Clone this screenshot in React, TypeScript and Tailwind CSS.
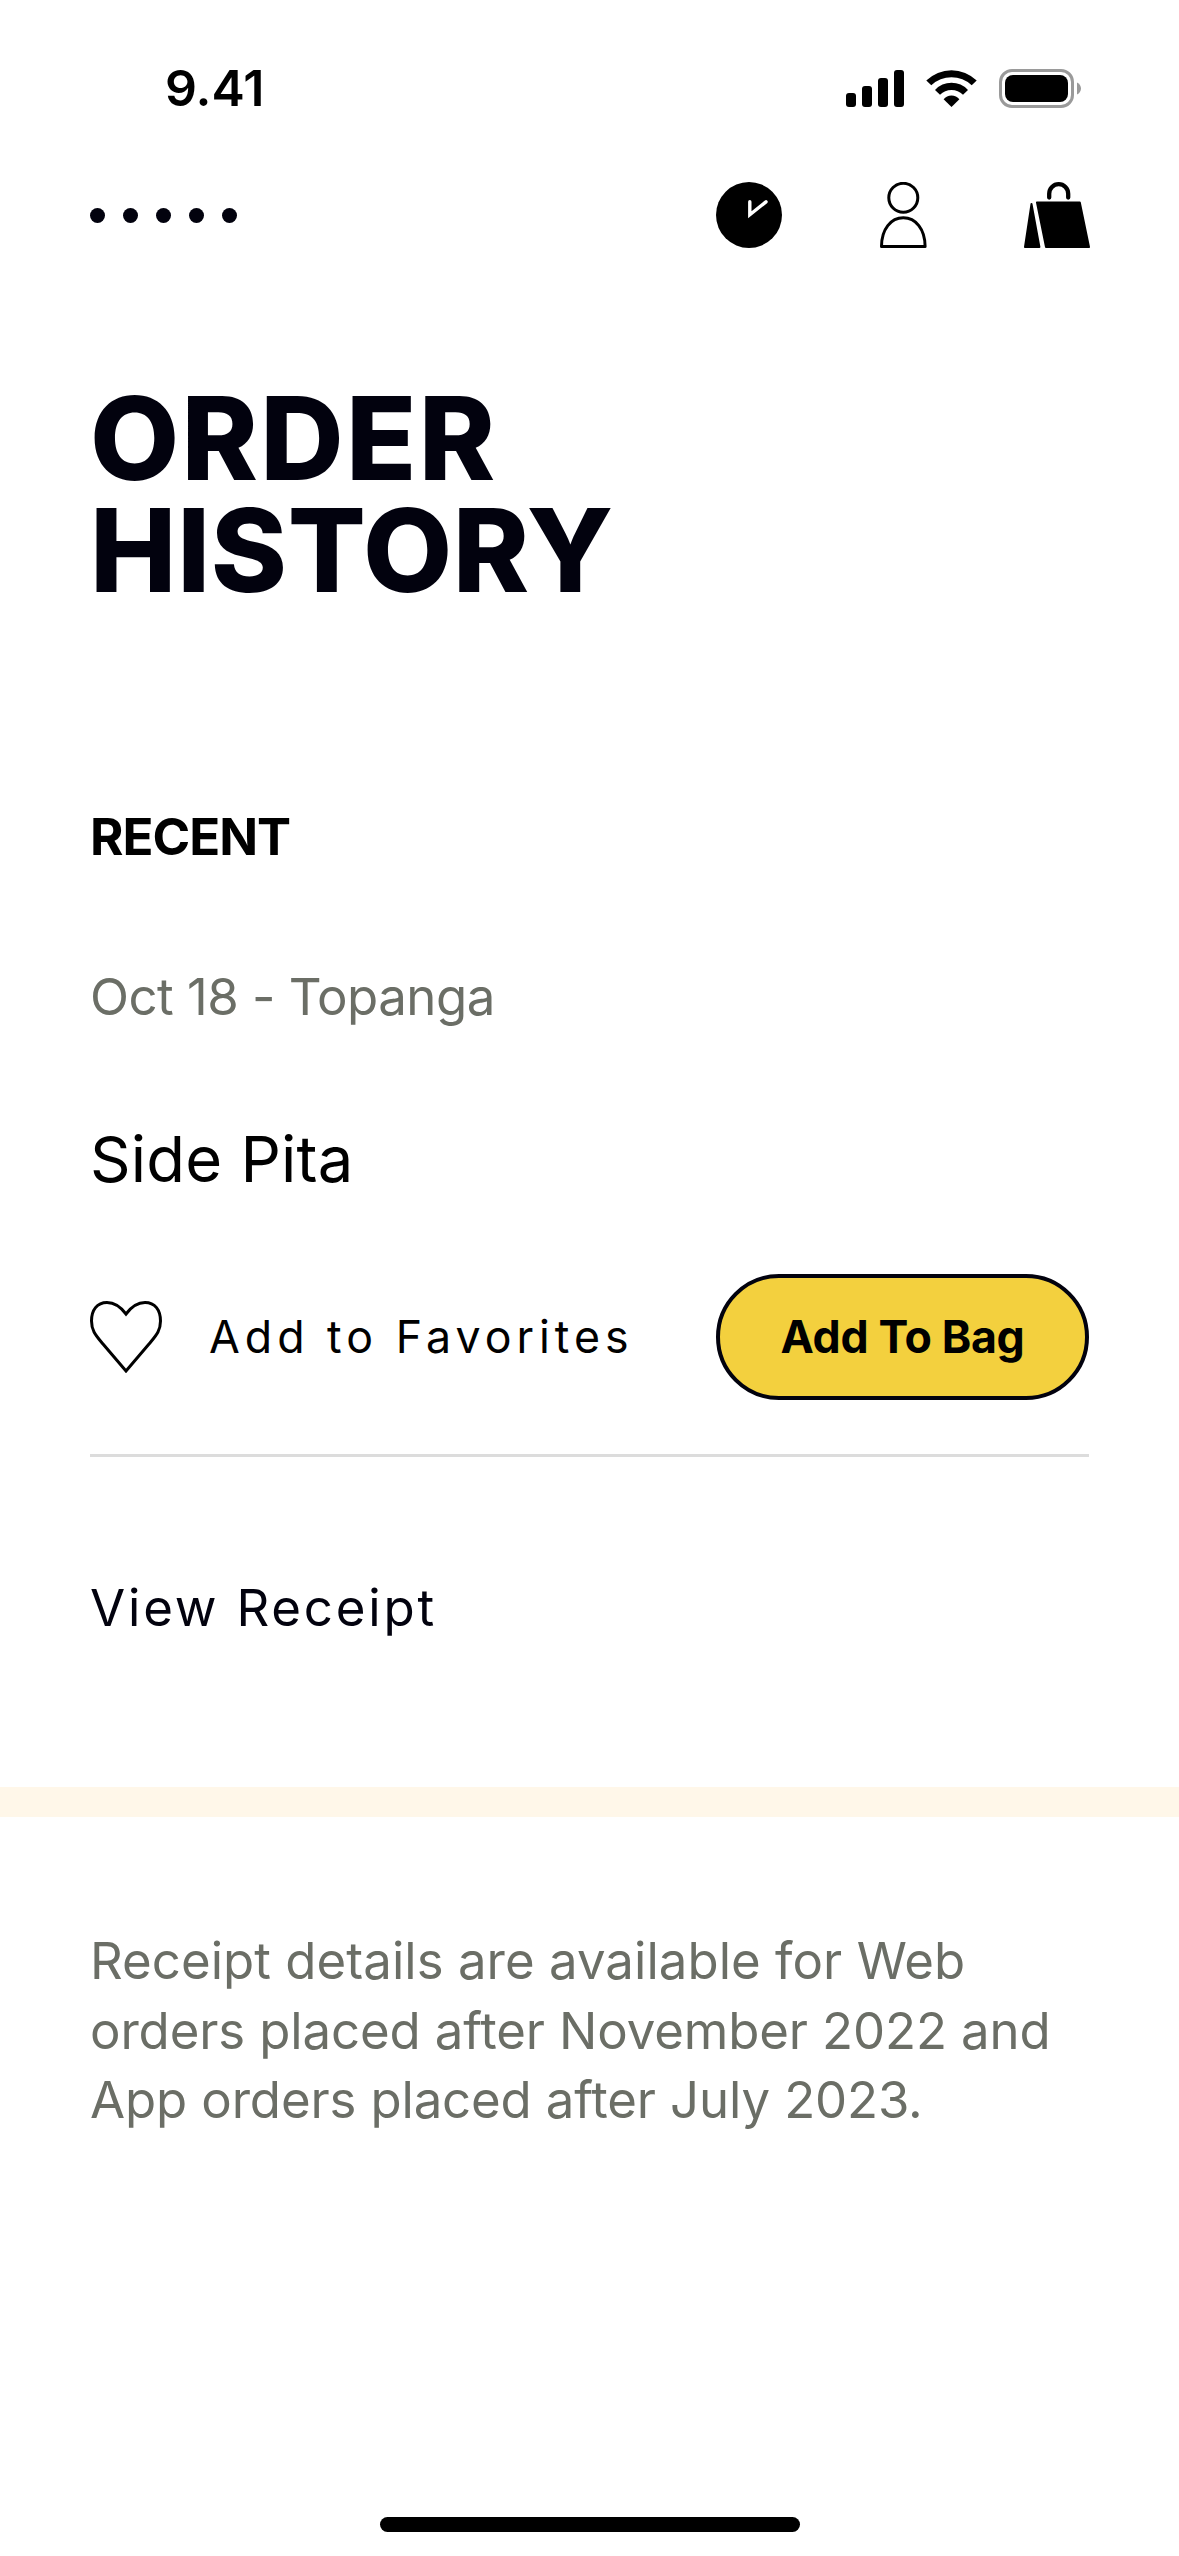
function SignalIcon() {
  return (
    <svg width="58" height="37" viewBox="0 0 58 37" fill="currentColor">
      <rect x="0" y="23" width="10" height="14" rx="3" />
      <rect x="16" y="16" width="10" height="21" rx="3" />
      <rect x="32" y="8" width="10" height="29" rx="3" />
      <rect x="48" y="0" width="10" height="37" rx="3" />
    </svg>
  );
}

function WifiIcon() {
  return (
    <svg width="51" height="37" viewBox="0 0 51 37" fill="currentColor">
      <path d="M0.3 10.5A36 36 0 0 1 50.7 10.5L45.7 15.3A29.5 29.5 0 0 0 5.3 15.3Z" />
      <path d="M9 20A22.3 22.3 0 0 1 42 20L37 24.7A16.4 16.4 0 0 0 14 24.7Z" />
      <path d="M17.6 29.3A10 10 0 0 1 33.4 29.3L25.5 37Z" />
    </svg>
  );
}

function BatteryIcon() {
  return (
    <svg width="82" height="39" viewBox="0 0 82 39">
      <rect x="1.5" y="1.5" width="72" height="36" rx="11.5" fill="none" stroke="#9a9a9a" strokeWidth="3" />
      <rect x="6" y="6" width="63" height="27" rx="8" />
      <path d="M78 13.5C80.5 14.6 82 17 82 19.5S80.5 24.4 78 25.5Z" fill="#9a9a9a" />
    </svg>
  );
}

function ClockIcon() {
  return (
    <svg width="66" height="66" viewBox="0 0 66 66">
      <circle cx="33" cy="33" r="33" />
      <path d="M33.8 19.8V32.8L50 19.8" fill="none" stroke="#fff" strokeWidth="3.4" strokeLinecap="round" />
    </svg>
  );
}

function PersonIcon() {
  return (
    <svg width="47" height="66" viewBox="0 0 47 66" fill="none" stroke="currentColor" strokeWidth="3">
      <circle cx="23.3" cy="15.8" r="14.5" />
      <path d="M1.5 64.5C1.5 47 11 35.8 23.3 35.8S45.1 47 45.1 64.5Z" strokeLinejoin="round" />
    </svg>
  );
}

function BagIcon() {
  return (
    <svg width="66" height="66" viewBox="0 0 66 66" fill="currentColor" stroke="currentColor" strokeLinejoin="round">
      <path d="M25.2 15.6V11.7A9.5 9.5 0 0 1 44.2 11.7V15.6" fill="none" strokeWidth="4.3" strokeLinecap="round" />
      <path d="M13 20.5H55.8L65 65H22Z" strokeWidth="2" />
      <path d="M7.5 22L1 65H15.4Z" strokeWidth="2" />
    </svg>
  );
}

function HeartIcon() {
  return (
    <svg width="72" height="72" viewBox="0 0 72 72" fill="none" stroke="currentColor" strokeWidth="3">
      <path d="M36 13C33 9 26 1.5 17 1.5C7 1.5 1.5 9 1.5 20C1.5 30 6 34.5 13 43L36 70L59 43C66 34.5 70.5 30 70.5 20C70.5 9 65 1.5 55 1.5C46 1.5 39 9 36 13Z" />
    </svg>
  );
}

function StatusBar() {
  return (
    <div className="mt-[58px] flex h-[60px] items-center justify-between pr-[98px] pl-[165px]">
      <span className="text-[50px] leading-[60px] font-semibold">9.41</span>
      <div className="flex items-center gap-[22px]">
        <SignalIcon />
        <WifiIcon />
        <BatteryIcon />
      </div>
    </div>
  );
}

function NavBar() {
  return (
    <nav className="mt-16 flex items-center justify-between px-[90px]">
      <div className="flex gap-[18px]">
        {[0, 1, 2, 3, 4].map((i) => (
          <span key={i} className="size-[15px] rounded-full bg-[#02020e]" />
        ))}
      </div>
      <div className="-mr-px flex gap-[97.5px]">
        <ClockIcon />
        <PersonIcon />
        <BagIcon />
      </div>
    </nav>
  );
}

function RecentOrder() {
  return (
    <section className="px-[90px]">
      <h2 className="mt-[200px] text-[51px] leading-[61px] font-bold tracking-[-1px]">RECENT</h2>
      <p className="mt-[99px] text-[51px] leading-[61px] tracking-[-0.55px] text-[#6b6e66]">Oct 18 - Topanga</p>
      <p className="mt-[94px] text-[63.3px] leading-[76px] tracking-[0.2px]">Side Pita</p>

      <div className="mt-[77px] flex items-center justify-between">
        <button className="flex items-center gap-[47px]">
          <HeartIcon />
          <span className="text-[44.7px] leading-[54px] tracking-[5px]">Add to Favorites</span>
        </button>
        <button className="flex h-[126px] w-[373px] items-center justify-center rounded-full border-4 border-[#02020e] bg-[#f3d03e] text-[44.7px] leading-[54px] font-bold tracking-[-0.35px]">
          Add To Bag
        </button>
      </div>

      <div className="mt-[54px] h-[3px] bg-[#dcdcdc]" />
      <p className="mt-[120px] text-[51px] leading-[61px] tracking-[2.8px] text-[#02020e]">View Receipt</p>
    </section>
  );
}

export default function App() {
  return (
    <div className="flex h-[2556px] w-[1179px] flex-col overflow-hidden bg-white font-['Inter',sans-serif] text-black">
      <StatusBar />
      <NavBar />

      <h1 className="mt-[134px] px-[90px] text-[115.5px] leading-[112px] font-extrabold text-[#02020e]">
        <span className="block tracking-[2.3px]">ORDER</span>
        <span className="block tracking-[0.7px]">HISTORY</span>
      </h1>

      <RecentOrder />

      <div className="mt-[149px] h-[30px] shrink-0 bg-[#fff7e9]" />
      <p className="mt-[109px] px-[90px] text-[50.9px] leading-[69.5px] whitespace-nowrap text-[#6b6e66]">
        <span className="block tracking-[0.06px]">Receipt details are available for Web</span>
        <span className="block tracking-[-0.11px]">orders placed after November 2022 and</span>
        <span className="block tracking-[-0.12px]">App orders placed after July 2023.</span>
      </p>

      {/* Home indicator */}
      <div className="mx-auto mt-auto mb-6 h-[15px] w-[420px] shrink-0 rounded-full bg-black" />
    </div>
  );
}
